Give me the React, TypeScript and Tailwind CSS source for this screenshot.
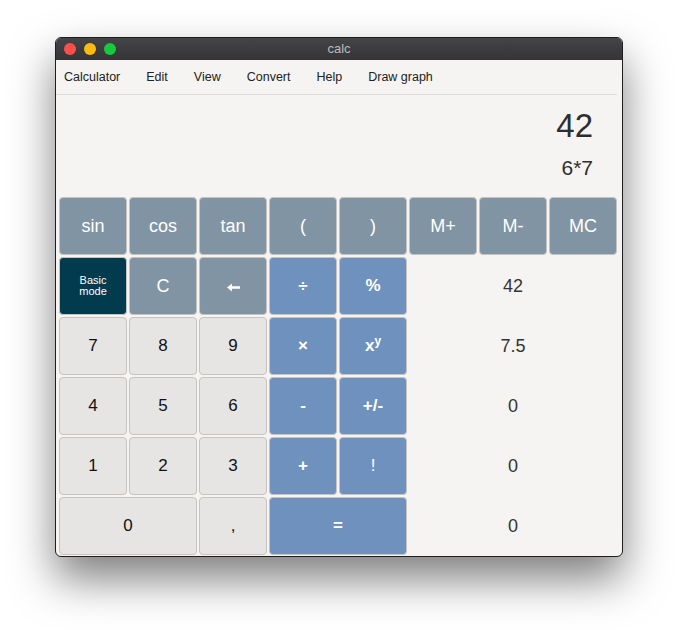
import React from 'react';

type Key = { label: React.ReactNode; kind: 'fn' | 'op' | 'num' | 'mode'; span?: number };

const kindClass: Record<Key['kind'], string> = {
  fn: 'bg-[#8194a3] text-white text-[18px]',
  op: 'bg-[#6e91bd] text-white text-[17px] font-bold',
  num: 'bg-[#e6e5e3] text-[#111] text-[17px]',
  mode: 'bg-[#023a4e] text-white text-[11px] leading-[11px]',
};

const CalcKey = ({ k }: { k: Key }) => (
  <div
    className={`${kindClass[k.kind]} ${k.span === 2 ? 'col-span-2' : ''} flex items-center justify-center rounded-[4px] border border-[#c8c3be] text-center`}
  >
    {k.label}
  </div>
);

// chunky backspace arrow like the native glyph
const BackArrow = () => (
  <svg width="13" height="9" viewBox="0 0 13 9" className="mt-[2px]">
    <path d="M0 4.5 L5 0.5 L5 3.2 L13 3.2 L13 5.8 L5 5.8 L5 8.5 Z" fill="white" />
  </svg>
);

const menu = ['Calculator', 'Edit', 'View', 'Convert', 'Help', 'Draw graph'];

const memory = ['42', '7.5', '0', '0', '0'];

export default function App() {
  const row1: Key[] = [
    { label: 'sin', kind: 'fn' },
    { label: 'cos', kind: 'fn' },
    { label: 'tan', kind: 'fn' },
    { label: '(', kind: 'fn' },
    { label: ')', kind: 'fn' },
    { label: 'M+', kind: 'fn' },
    { label: 'M-', kind: 'fn' },
    { label: 'MC', kind: 'fn' },
  ];
  const left: Key[][] = [
    [
      { label: <span>Basic<br />mode</span>, kind: 'mode' },
      { label: 'C', kind: 'fn' },
      { label: <BackArrow />, kind: 'fn' },
      { label: '÷', kind: 'op' },
      { label: '%', kind: 'op' },
    ],
    [
      { label: '7', kind: 'num' },
      { label: '8', kind: 'num' },
      { label: '9', kind: 'num' },
      { label: '×', kind: 'op' },
      { label: <span>x<sup className="text-[12px] -top-[6px]">y</sup></span>, kind: 'op' },
    ],
    [
      { label: '4', kind: 'num' },
      { label: '5', kind: 'num' },
      { label: '6', kind: 'num' },
      { label: '-', kind: 'op' },
      { label: '+/-', kind: 'op' },
    ],
    [
      { label: '1', kind: 'num' },
      { label: '2', kind: 'num' },
      { label: '3', kind: 'num' },
      { label: '+', kind: 'op' },
      { label: <span className="font-normal">!</span>, kind: 'op' },
    ],
    [
      { label: '0', kind: 'num', span: 2 },
      { label: ',', kind: 'num' },
      { label: '=', kind: 'op', span: 2 },
    ],
  ];

  return (
    <div className="min-h-[630px] w-[678px] bg-white pl-[55px] pt-[37px] font-['Liberation_Sans',Arial,sans-serif]">
      <div className="flex h-[520px] w-[568px] flex-col overflow-hidden rounded-[6px] border border-[#1e1e1e] bg-[#f5f4f2] shadow-[0_22px_44px_rgba(0,0,0,0.5)]">
        {/* title bar */}
        <div className="relative flex h-[22px] items-center bg-gradient-to-b from-[#444447] to-[#353538] px-[8px]">
          <div className="flex gap-[8px]">
            <span className="h-[12px] w-[12px] rounded-full bg-[#fc4f4b]" />
            <span className="h-[12px] w-[12px] rounded-full bg-[#fdbb0f]" />
            <span className="h-[12px] w-[12px] rounded-full bg-[#16c93d]" />
          </div>
          <div className="absolute inset-x-0 top-0 flex h-[22px] items-center justify-center text-[13px] text-[#bcbcbc]">
            calc
          </div>
        </div>

        {/* menu */}
        <div className="mr-[5px] flex h-[35px] items-center gap-[26px] border-b border-[#dcdbd9] pl-[8px] text-[12.5px] text-[#222]">
          {menu.map((m) => (
            <span key={m}>{m}</span>
          ))}
        </div>

        {/* display */}
        <div className="flex h-[102px] flex-col items-end pr-[29px] text-[#2e2e2e]">
          <div className="mt-[13px] text-[33px] leading-[36px]">42</div>
          <div className="mt-[12px] text-[21px] leading-[24px]">6*7</div>
        </div>

        {/* keypad */}
        <div className="grid grid-cols-[repeat(8,68px)] grid-rows-[repeat(6,58px)] gap-[2px] pl-[3px]">
          {row1.map((k, i) => (
            <CalcKey key={i} k={k} />
          ))}
          {left.map((row, r) => (
            <React.Fragment key={r}>
              {row.map((k, i) => (
                <CalcKey key={i} k={k} />
              ))}
              <div className="col-span-3 flex items-center justify-center text-[18px] text-[#333]">
                {memory[r]}
              </div>
            </React.Fragment>
          ))}
        </div>
      </div>
    </div>
  );
}
